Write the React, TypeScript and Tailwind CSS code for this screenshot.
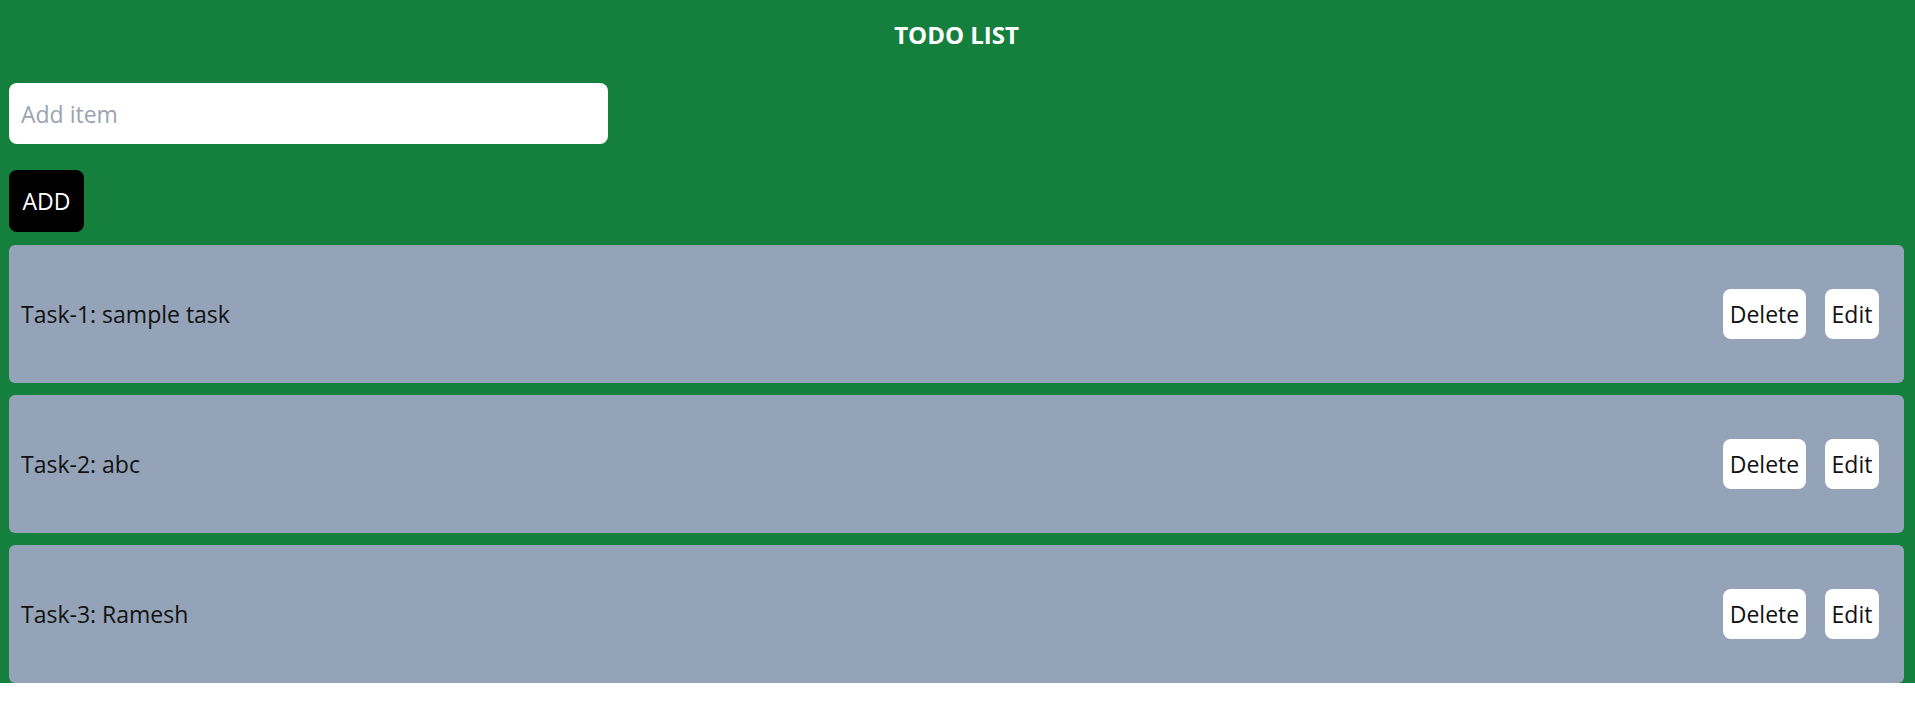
import React, { useState } from 'react';

type Task = { id: number; text: string };

const initialTasks: Task[] = [
  { id: 1, text: 'sample task' },
  { id: 2, text: 'abc' },
  { id: 3, text: 'Ramesh' },
];

const App: React.FC = () => {
  const [tasks, setTasks] = useState<Task[]>(initialTasks);
  const [value, setValue] = useState('');

  const addTask = () => {
    if (!value.trim()) return;
    setTasks([...tasks, { id: tasks.length + 1, text: value }]);
    setValue('');
  };

  return (
    <div className="font-['Open_Sans',sans-serif]">
      <div className="bg-[#15803d] pl-[9px] pr-[11px]">
        {/* Header */}
        <h1 className="h-[68px] flex items-center justify-center text-white font-bold text-[24px] pt-[2px]">
          TODO LIST
        </h1>

        {/* Input + add */}
        <div className="mt-[15px]">
          <input
            value={value}
            onChange={(e) => setValue(e.target.value)}
            placeholder="Add item"
            className="w-[599px] h-[61px] rounded-lg bg-white px-3 text-[23px] text-gray-900 placeholder:text-[#9aa3b2] outline-none"
          />
        </div>
        <button
          onClick={addTask}
          className="mt-[26px] h-[62px] w-[75px] rounded-lg bg-black text-white text-[23px] flex items-center justify-center"
        >
          ADD
        </button>

        {/* Task list */}
        <div className="mt-[13px] flex flex-col gap-3">
          {tasks.map((task, i) => (
            <div
              key={task.id}
              className="h-[138px] rounded-md bg-[#94a3b8] flex items-center justify-between pl-3 pr-[25px]"
            >
              <span className="text-[23px] text-[#111]">
                Task-{i + 1}: {task.text}
              </span>
              <div className="flex items-center gap-[19px]">
                <button
                  onClick={() => setTasks(tasks.filter((t) => t.id !== task.id))}
                  className="h-[50px] w-[83px] rounded-lg bg-white text-[23px] text-[#111]"
                >
                  Delete
                </button>
                <button className="h-[50px] w-[54px] rounded-lg bg-white text-[23px] text-[#111]">
                  Edit
                </button>
              </div>
            </div>
          ))}
        </div>
      </div>
    </div>
  );
};

export default App;
